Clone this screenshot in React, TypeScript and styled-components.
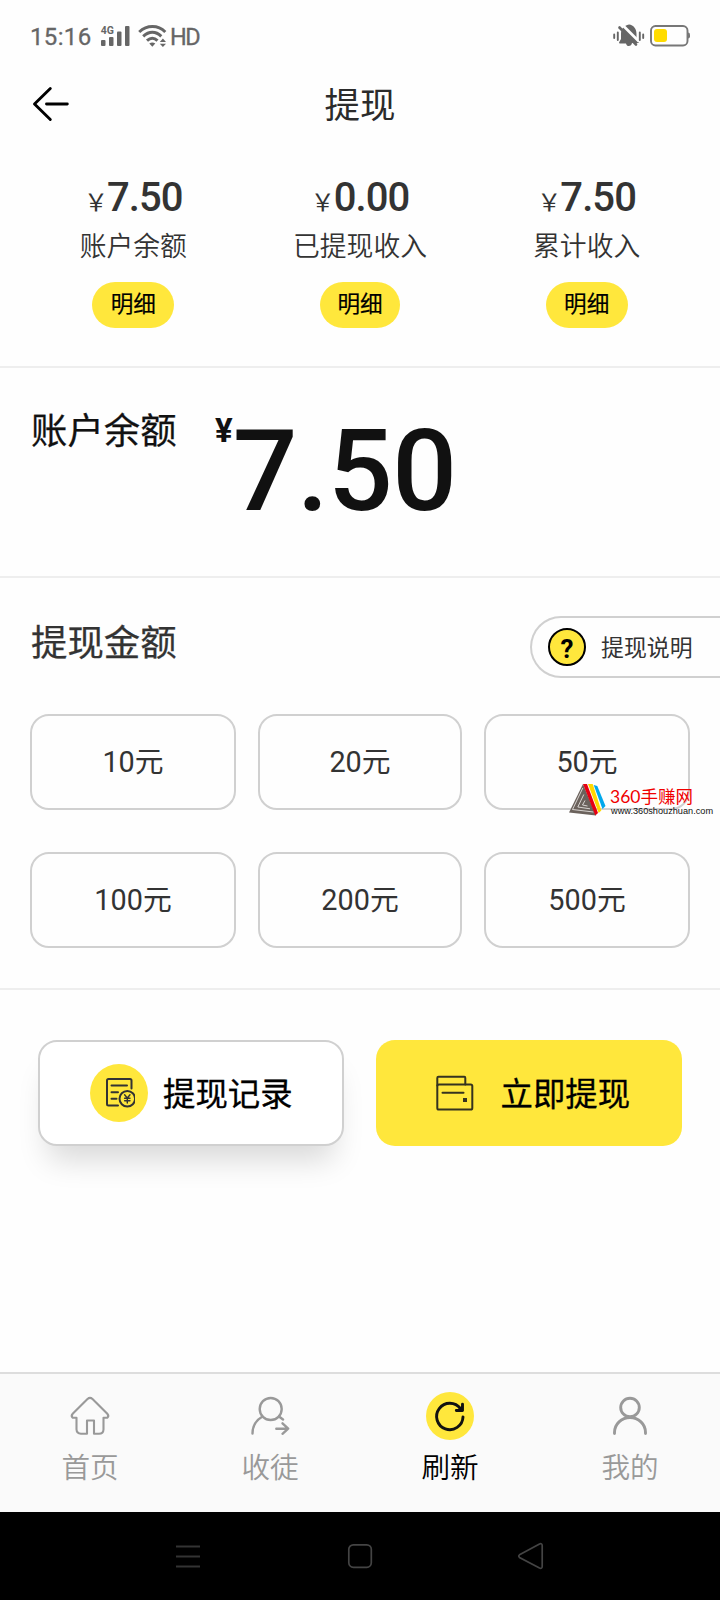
import React from 'react';
import styled, { createGlobalStyle } from 'styled-components';

const YELLOW = '#ffe73c';
const LINE = '#d0d0d0';

const GlobalStyle = createGlobalStyle`
  * { box-sizing: border-box; }
  body {
    margin: 0;
    background: #fefefe;
    font-family: Roboto, 'Noto Sans CJK SC', sans-serif;
    color: #333;
  }
  button { font: inherit; color: inherit; background: none; border: 0; padding: 0; margin: 0; }
  svg { display: block; flex: none; }
`;

const Screen = styled.div`
  width: 720px;
  height: 1600px;
  display: flex;
  flex-direction: column;
  overflow: hidden;
`;

const StatusBar = styled.div`
  height: 72px;
  padding: 0 30px;
  display: flex;
  align-items: center;
  justify-content: space-between;
  color: #666;
  font-size: 24px;
  line-height: 28px;
`;

const StatusGroup = styled.div<{ $gap: number }>`
  display: flex;
  align-items: center;
  gap: ${(p) => p.$gap}px;
`;

const Clock = styled.span`
  width: 62px;
  padding-top: 1px;
  letter-spacing: 0.35px;
  -webkit-text-stroke: 0.3px #666;
`;

const NetworkLabel = styled.span`
  margin-left: -6px;
  padding-top: 1px;
  letter-spacing: -1.4px;
  font-size: 23.5px;
  -webkit-text-stroke: 0.3px #666;
`;

const TitleBar = styled.header`
  height: 64px;
  padding: 0 30px;
  display: grid;
  grid-template-columns: 60px 1fr 60px;
  align-items: center;
`;

const Title = styled.h1`
  margin: 0;
  padding-top: 4px;
  font-size: 35.5px;
  font-weight: 400;
  line-height: 60px;
  text-align: center;
  color: #2b2b2b;
`;

const Stats = styled.section`
  height: 232px;
  padding: 38px 20px 0;
  display: grid;
  grid-template-columns: repeat(3, 1fr);
  border-bottom: 2px solid #eee;
`;

const Stat = styled.div`
  display: flex;
  flex-direction: column;
  align-items: center;
`;

const StatAmount = styled.div`
  display: flex;
  align-items: baseline;
  height: 46px;
  line-height: 47px;
  font-size: 40px;
  font-weight: 500;
  letter-spacing: -0.9px;
`;

const SmallYen = styled.span`
  margin-right: -1px;
  font-size: 24px;
  font-weight: 400;
  letter-spacing: 0;
`;

const StatLabel = styled.div`
  margin-top: 7px;
  height: 40px;
  line-height: 40px;
  font-size: 26.8px;
  font-weight: 350;
`;

const DetailButton = styled.button<{ $width: number }>`
  margin-top: 15px;
  width: ${(p) => p.$width}px;
  height: 46px;
  padding-bottom: 0;
  border-radius: 23px;
  background: ${YELLOW};
  color: #000;
  font-size: 22.6px;
  line-height: 46px;
  -webkit-text-stroke: 0.2px #000;
`;

const Balance = styled.section`
  height: 210px;
  padding: 34px 30px 0 31px;
  display: flex;
  align-items: flex-start;
  border-bottom: 2px solid #eee;
  color: #111;
`;

const SectionLabel = styled.h2`
  margin: 0;
  font-size: 36.4px;
  font-weight: 400;
  line-height: 60px;
  -webkit-text-stroke: 0.25px currentColor;
`;

const BigYen = styled.span`
  margin-left: 38.5px;
  font-size: 33px;
  font-weight: 700;
  line-height: 57px;
`;

const BigAmount = styled.span`
  font-size: 114px;
  font-weight: 500;
  line-height: 138px;
  letter-spacing: -0.6px;
`;

const Amounts = styled.section`
  height: 412px;
  padding: 38px 0 0 30px;
  border-bottom: 2px solid #eee;
`;

const AmountsHead = styled.div`
  height: 62px;
  padding-left: 1px;
  display: flex;
  justify-content: space-between;
  align-items: flex-start;

  ${SectionLabel} {
    line-height: 56px;
  }
`;

const HelpTag = styled.button`
  width: 190px;
  height: 62px;
  padding-left: 16px;
  display: flex;
  align-items: center;
  gap: 15px;
  border: 2px solid ${LINE};
  border-right: 0;
  border-radius: 31px 0 0 31px;
  font-size: 22.9px;
  line-height: 32px;
`;

const HelpText = styled.span`
  padding-top: 3px;
`;

const HelpMark = styled.span`
  width: 38px;
  height: 38px;
  border: 2.5px solid #000;
  border-radius: 50%;
  background: ${YELLOW};
  color: #000;
  font-size: 26px;
  font-weight: 700;
  line-height: 38px;
  text-align: center;
`;

const Options = styled.div`
  margin-top: 36px;
  padding-right: 30px;
  display: grid;
  grid-template-columns: 206px 204px 206px;
  grid-auto-rows: 96px;
  gap: 42px 22px;
`;

const Option = styled.button`
  border: 2px solid ${LINE};
  border-radius: 19px;
  font-size: 28.8px;
  line-height: 92px;
`;

const OptionCell = styled.div`
  position: relative;
  display: grid;
`;

const Watermark = styled.div`
  position: absolute;
  left: 85px;
  top: 69px;
  display: flex;
  gap: 4px;
`;

const WatermarkText = styled.div`
  padding-top: 5px;
  white-space: nowrap;
`;

const WatermarkName = styled.div`
  font-family: Lato, 'Noto Sans CJK SC', sans-serif;
  font-size: 17.5px;
  line-height: 17px;
  color: #f00000;
`;

const WatermarkUrl = styled.div`
  padding-left: 1px;
  font-family: 'Liberation Sans', sans-serif;
  font-size: 9px;
  line-height: 12px;
  color: #111;
  transform: scaleX(1.02);
  transform-origin: left;
`;

const Actions = styled.section`
  flex: 1;
  padding: 50px 38px 0;
  display: flex;
  align-items: flex-start;
  justify-content: space-between;
`;

const ActionButton = styled.button<{ $primary?: boolean }>`
  width: 306px;
  height: 106px;
  display: flex;
  align-items: center;
  gap: ${(p) => (p.$primary ? 27 : 15)}px;
  padding-left: ${(p) => (p.$primary ? 59.5 : 50)}px;
  border: ${(p) => (p.$primary ? 'none' : `2px solid ${LINE}`)};
  border-radius: 19px;
  background: ${(p) => (p.$primary ? YELLOW : '#fff')};
  box-shadow: ${(p) => (p.$primary ? 'none' : '0 24px 30px -10px rgba(0, 0, 0, 0.15)')};
  color: #000;
  font-size: 32.4px;
  line-height: 48px;
`;

const ActionText = styled.span`
  padding-top: 4px;
  -webkit-text-stroke: 0.3px #000;
`;

const RecordBadge = styled.span`
  width: 58px;
  height: 58px;
  flex: none;
  display: flex;
  align-items: center;
  justify-content: center;
  border-radius: 50%;
  background: ${YELLOW};
`;

const TabBar = styled.nav`
  height: 140px;
  display: grid;
  grid-template-columns: repeat(4, 1fr);
  border-top: 2px solid #ddd;
  background: #fafafa;
`;

const Tab = styled.button<{ $active?: boolean }>`
  padding-top: 18px;
  display: flex;
  flex-direction: column;
  align-items: center;
  color: ${(p) => (p.$active ? '#000' : '#999')};
  font-size: 28.6px;
  font-weight: 350;
  line-height: 57px;
`;

const TabIcon = styled.span<{ $active?: boolean }>`
  width: 48px;
  height: 48px;
  border-radius: 50%;
  background: ${(p) => (p.$active ? YELLOW : 'transparent')};
`;

const SystemNav = styled.div`
  height: 88px;
  padding: 0 172px;
  display: flex;
  align-items: center;
  justify-content: space-between;
  background: #000;
`;

const SignalIcon = () => (
  <svg width="30" height="24" viewBox="0 0 30 24" fill="#666">
    <rect x="1" y="16" width="4.5" height="6" rx="1" />
    <rect x="9" y="13" width="4.5" height="9" rx="1" />
    <rect x="17" y="7.5" width="4.5" height="14.5" rx="1" />
    <rect x="25" y="2" width="4.5" height="20" rx="1" />
    <text x="0.8" y="10" fontSize="10.5" fontWeight="700" fontFamily="Roboto">4G</text>
  </svg>
);

const WifiIcon = () => (
  <svg width="30" height="24" viewBox="0 0 30 24" fill="none" stroke="#666" strokeWidth="3">
    <path d="M1.2 8C9 .8 20 .8 27.3 8" />
    <path d="M5.2 12.3C11 7 17.8 7 23.3 12.3" />
    <path d="M9 16.7C12.5 13.5 16.2 13.5 19.5 16.7" />
    <path d="M11.3 19.6Q14.3 17.6 17.3 19.6L14.3 22.8Z" fill="#666" stroke="none" />
    <path d="M21.8 18L24.9 14.5L28 18ZM21.8 19.7L24.9 23.1L28 19.7Z" fill="#666" stroke="none" />
  </svg>
);

const MutedIcon = () => (
  <svg width="32" height="24" viewBox="0 0 32 24">
    <path d="M6 18.5L8 15V10C8 4.8 11 1.5 16 .5C20.5 1 23.5 4.5 23.5 10V15.5L26 19H19C18.5 23 13.5 23 13 19.5H6.5Z" fill="#666" />
    <path d="M10 1.5L26 17.5" stroke="#fefefe" strokeWidth="2.6" />
    <path d="M6.5 3.5L23 20.5" stroke="#666" strokeWidth="2.6" strokeLinecap="round" />
    <path d="M1.2 10.5V14M4.8 8.5V16M26.8 8.5V16M30.2 10.5V14" stroke="#666" strokeWidth="1.9" strokeLinecap="round" />
  </svg>
);

const BatteryIcon = () => (
  <svg width="40" height="22" viewBox="0 0 40 22">
    <rect x="1" y="1" width="36.5" height="19.5" rx="4.5" fill="none" stroke="#777" strokeWidth="1.9" />
    <path d="M38 7.5Q40 7.5 40 9.5V11.5Q40 13.5 38 13.5Z" fill="#777" />
    <rect x="4" y="4" width="13" height="13" rx="3" fill="#ffdc00" />
  </svg>
);

const BackIcon = () => (
  <svg width="40" height="36" viewBox="0 0 40 36" fill="none" stroke="#000" strokeWidth="2.9" strokeLinecap="round" strokeLinejoin="round">
    <path d="M20.3 2.5L4.5 18L20.3 33.5M16.5 18H37.3" />
  </svg>
);

const RecordIcon = () => (
  <svg width="32" height="32" viewBox="0 0 32 32" fill="none" stroke="#333" strokeWidth="2" strokeLinecap="round" strokeLinejoin="round">
    <path d="M28.5 11.5V3.5Q28.5 2 27 2H5.5Q4 2 4 3.5V27Q4 28.5 5.5 28.5H15" />
    <path d="M8.5 8.5H24M8.5 15.3H15M8.5 21.7H13.5" />
    <circle cx="24.3" cy="21.8" r="7.8" />
    <path d="M21.6 17.8L24.3 21L27 17.8M24.3 21V26M21.6 21.3H27M21.6 23.7H27" strokeWidth="1.4" />
  </svg>
);

const WalletIcon = () => (
  <svg width="38" height="36" viewBox="0 0 38 36" fill="none" stroke="#35331f" strokeWidth="2" strokeLinecap="round" strokeLinejoin="round">
    <rect x="1.3" y="9.5" width="35" height="25" rx="1.6" />
    <path d="M1.3 10.5V3Q1.3 1.8 2.5 1.8H28.3Q29.3 1.8 29.3 3V9.5" />
    <path d="M6.5 17.8H27.5" />
    <rect x="27" y="23" width="4" height="4" fill="#35331f" stroke="none" />
  </svg>
);

const HomeIcon = () => (
  <svg width="48" height="48" viewBox="0 0 48 48" fill="none" stroke="#999" strokeWidth="2.1" strokeLinejoin="round">
    <path d="M21.5 7Q24 4.7 26.5 7L41.3 21.7Q43.3 24 41.3 25.8H37.5V37.5Q37.3 41.8 33 41.8H28V28.5H21V41.8H15Q10.7 41.3 10.5 37.5V25.8H6.7Q4.7 24 6.7 21.7Z" />
  </svg>
);

const InviteIcon = () => (
  <svg width="48" height="48" viewBox="0 0 48 48" fill="none" stroke="#999" strokeWidth="2.4" strokeLinecap="round" strokeLinejoin="round">
    <circle cx="24.7" cy="17" r="11" />
    <path d="M16.5 24.5C9.5 28.5 6.5 34 6.5 41.5M33 24.5L37 27.5" />
    <path d="M30.3 36.7H42M36.5 31.3L42.2 36.7L36.5 41.8" />
  </svg>
);

const RefreshIcon = () => (
  <svg width="48" height="48" viewBox="0 0 48 48" fill="none" stroke="#111" strokeWidth="2.9" strokeLinecap="round" strokeLinejoin="round">
    <path d="M37 25A13.2 13.2 0 1 1 34.5 16.7" />
    <path d="M36.5 12.3V18.5H30.3" />
    <path d="M36 14.5V18H32Z" fill="#111" strokeWidth="1" />
  </svg>
);

const ProfileIcon = () => (
  <svg width="48" height="48" viewBox="0 0 48 48" fill="none" stroke="#999" strokeWidth="2.9" strokeLinecap="round">
    <circle cx="24" cy="15.5" r="9.3" />
    <path d="M8.5 41.5V40.5A15.500 15 0 0 1 39.5 40.5V41.5" />
  </svg>
);

const PyramidLogo = () => (
  <svg width="37" height="33" viewBox="0 0 37 33">
    <path d="M14 1L0 29.5L27 32.5Z" fill="#6b625c" />
    <path d="M13.8 5L3.5 26.5L24.5 29M14.8 11.5L8.8 24L21 25.8M16 17.5L13.5 22L18.5 23" fill="none" stroke="#f2f0ee" strokeWidth="0.8" />
    <path d="M14 1H18L29 30L26.300 32.5Z" fill="#e60012" />
    <path d="M19 1H23.7L32.3 27.500L29.700 30Z" fill="#ffd800" />
    <path d="M24.7 2L28.3 3L36.500 23L33.5 26Z" fill="#00a8ec" />
  </svg>
);

const stats = [
  { value: '7.50', label: '账户余额', width: 82 },
  { value: '0.00', label: '已提现收入', width: 80 },
  { value: '7.50', label: '累计收入', width: 82 },
];

const options = [10, 20, 50, 100, 200, 500];

const tabs = [
  { label: '首页', icon: <HomeIcon /> },
  { label: '收徒', icon: <InviteIcon /> },
  { label: '刷新', icon: <RefreshIcon />, active: true },
  { label: '我的', icon: <ProfileIcon /> },
];

export default function App() {
  return (
    <Screen>
      <GlobalStyle />
      <StatusBar>
        <StatusGroup $gap={8}>
          <Clock>15:16</Clock>
          <SignalIcon />
          <WifiIcon />
          <NetworkLabel>HD</NetworkLabel>
        </StatusGroup>
        <StatusGroup $gap={5}>
          <MutedIcon />
          <BatteryIcon />
        </StatusGroup>
      </StatusBar>
      <TitleBar>
        <BackIcon />
        <Title>提现</Title>
      </TitleBar>
      <Stats>
        {stats.map((s) => (
          <Stat key={s.label}>
            <StatAmount>
              <SmallYen>￥</SmallYen>
              {s.value}
            </StatAmount>
            <StatLabel>{s.label}</StatLabel>
            <DetailButton $width={s.width}>明细</DetailButton>
          </Stat>
        ))}
      </Stats>
      <Balance>
        <SectionLabel>账户余额</SectionLabel>
        <BigYen>¥</BigYen>
        <BigAmount>7.50</BigAmount>
      </Balance>
      <Amounts>
        <AmountsHead>
          <SectionLabel>提现金额</SectionLabel>
          <HelpTag>
            <HelpMark>?</HelpMark>
            <HelpText>提现说明</HelpText>
          </HelpTag>
        </AmountsHead>
        <Options>
          {options.map((n) => (
            <OptionCell key={n}>
              <Option>{n}元</Option>
              {n === 50 && (
                <Watermark>
                  <PyramidLogo />
                  <WatermarkText>
                    <WatermarkName>360手赚网</WatermarkName>
                    <WatermarkUrl>www.360shouzhuan.com</WatermarkUrl>
                  </WatermarkText>
                </Watermark>
              )}
            </OptionCell>
          ))}
        </Options>
      </Amounts>
      <Actions>
        <ActionButton>
          <RecordBadge>
            <RecordIcon />
          </RecordBadge>
          <ActionText>提现记录</ActionText>
        </ActionButton>
        <ActionButton $primary>
          <WalletIcon />
          <ActionText>立即提现</ActionText>
        </ActionButton>
      </Actions>
      <TabBar>
        {tabs.map((t) => (
          <Tab key={t.label} $active={t.active}>
            <TabIcon $active={t.active}>{t.icon}</TabIcon>
            {t.label}
          </Tab>
        ))}
      </TabBar>
      <SystemNav>
        <svg width="32" height="32" viewBox="0 0 32 32" stroke="#333" strokeWidth="2">
          <path d="M4 6.5H28M4 16.5H28M4 26.5H28" />
        </svg>
        <svg width="32" height="32" viewBox="0 0 32 32" fill="none" stroke="#444" strokeWidth="1.7">
          <rect x="4.8" y="4.8" width="22.5" height="22.5" rx="4.5" />
        </svg>
        <svg width="32" height="32" viewBox="0 0 32 32" fill="none" stroke="#444" strokeWidth="1.7">
          <path d="M3.5 14.8L23.5 4Q26 3 26.2 5.5V26.5Q26 29 23.5 28L3.5 17.5Q2 16 3.5 14.8Z" />
        </svg>
      </SystemNav>
    </Screen>
  );
}
